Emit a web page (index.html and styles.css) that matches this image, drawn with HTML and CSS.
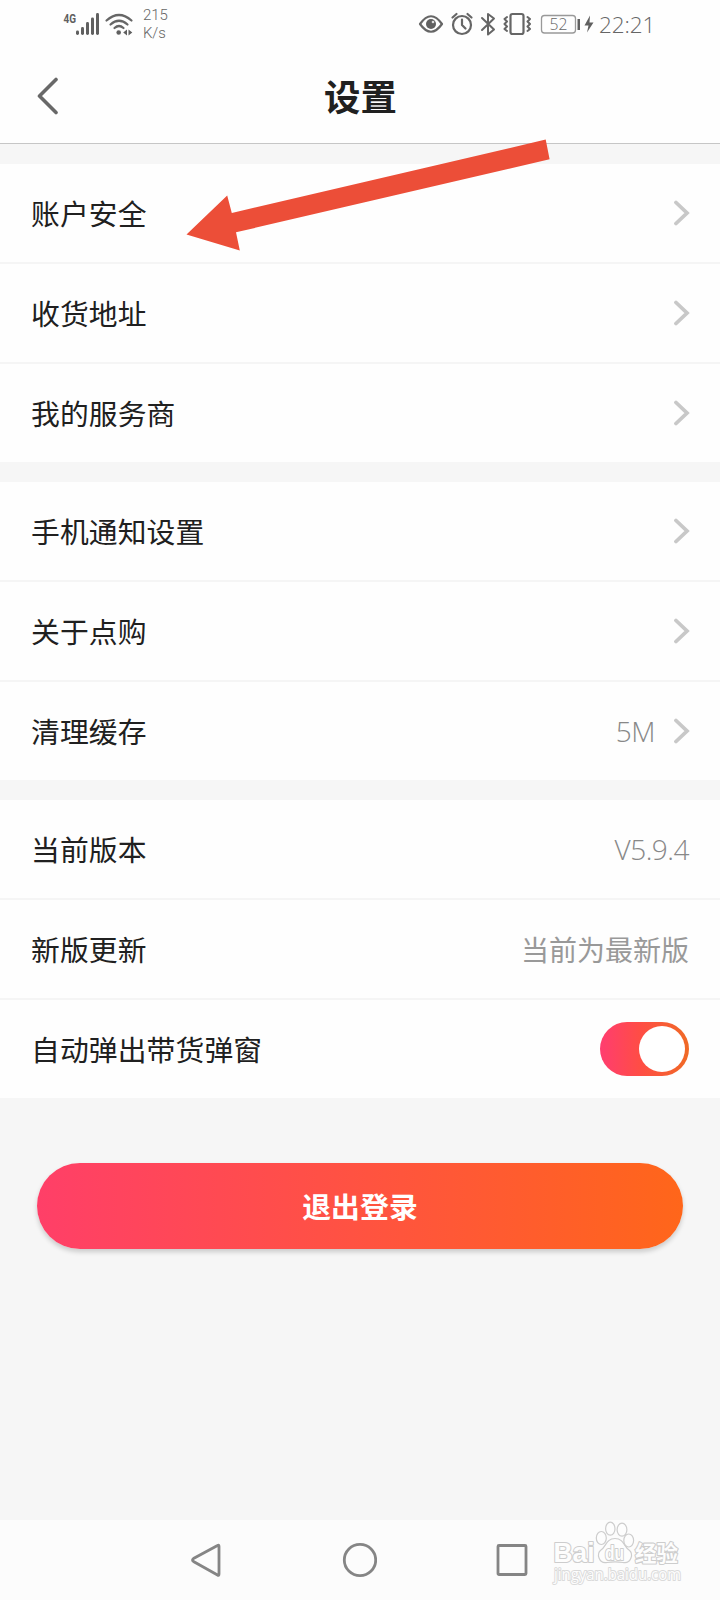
FILE: index.html
```html
<!DOCTYPE html>
<html lang="zh-CN">
<head>
<meta charset="utf-8">
<title>设置</title>
<link rel="stylesheet" href="styles.css">
</head>
<body>
<div class="screen">
  <div class="status">
    <div class="status-group">
      <svg width="76" height="48" viewBox="63 0 76 48">
        <text class="net" x="63.5" y="22.500" textLength="12.5" lengthAdjust="spacingAndGlyphs">4G</text>
        <g class="solid">
          <rect x="76" y="30.500" width="3" height="4.500" rx="1.400"/><rect x="81" y="27" width="3" height="8" rx="1.400"/><rect x="86" y="22" width="3" height="13" rx="1.400"/><rect x="91" y="17.500" width="3" height="17.500" rx="1.400"/><rect x="96" y="13" width="3" height="22" rx="1.400"/>
          <circle cx="118.700" cy="32.500" r="2.300"/>
          <path d="M127 29.500v6l-3.800-3zM128.500 29.500v6l3.800-3z"/>
        </g>
        <g class="line"><path d="M106.500 20.500Q119 9.500 131.500 20.500"/><path d="M110.500 24.500Q119 17 127.500 24.500"/><path d="M114.500 28Q119 24 123.500 28"/></g>
      </svg>
      <div class="speed"><span>215</span><span>K/s</span></div>
    </div>
    <div class="status-group">
      <svg width="178" height="48" viewBox="418 0 178 48">
        <g class="line">
          <path d="M420 24Q431 8.500 442 24Q431 39.500 420 24z"/>
          <circle cx="462" cy="25" r="9"/><path d="M462 19.500V25l3.500 3.500M452.500 17.500l4-3.500M471.500 17.500l-4-3.500"/>
          <path class="thin" d="M482 18l12 11.500-6 5V14l6 4.500L482 30"/>
          <rect x="510.500" y="14" width="13" height="20" rx="2"/>
          <path class="thin" d="M507 17l-2.500 2 2.500 2.500-2.500 2.500 2.500 2.500-2.500 2.500 2.500 2M527.500 17l2.500 2-2.500 2.500 2.500 2.500-2.500 2.500 2.500 2.500-2.500 2"/>
        </g>
        <circle class="solid" cx="431" cy="24" r="5"/><circle cx="433" cy="22" r="1.300" fill="#ddd"/>
        <rect class="battery" x="541.500" y="15.500" width="34" height="17.500" rx="3"/>
        <text class="charge" x="549.500" y="30" textLength="18" lengthAdjust="spacingAndGlyphs">52</text>
        <path class="solid" d="M577.500 19h2.500v11h-2.500zM590 15.500l-5.500 10h4l-1.500 7 6.500-10h-4z"/>
      </svg>
      <span class="clock">22:21</span>
    </div>
  </div>

  <header class="header">
    <svg class="back" width="24" height="40" viewBox="0 0 24 40"><path d="M20 4.500L3.500 21 20 37.500"/></svg>
    <h1 class="title">设置</h1>
  </header>

  <main class="content">
    <section class="group">
      <div class="row"><span>账户安全</span><svg class="chev" viewBox="0 0 16 26"><path d="M2 2.500L13 13 2 23.500"/></svg></div>
      <div class="row"><span>收货地址</span><svg class="chev" viewBox="0 0 16 26"><path d="M2 2.500L13 13 2 23.500"/></svg></div>
      <div class="row"><span>我的服务商</span><svg class="chev" viewBox="0 0 16 26"><path d="M2 2.500L13 13 2 23.500"/></svg></div>
    </section>
    <section class="group">
      <div class="row"><span>手机通知设置</span><svg class="chev" viewBox="0 0 16 26"><path d="M2 2.500L13 13 2 23.500"/></svg></div>
      <div class="row"><span>关于点购</span><svg class="chev" viewBox="0 0 16 26"><path d="M2 2.500L13 13 2 23.500"/></svg></div>
      <div class="row"><span>清理缓存</span><div class="more"><span class="value">5M</span><svg class="chev" viewBox="0 0 16 26"><path d="M2 2.500L13 13 2 23.500"/></svg></div></div>
    </section>
    <section class="group">
      <div class="row"><span>当前版本</span><span class="value">V5.9.4</span></div>
      <div class="row"><span>新版更新</span><span class="value cjk">当前为最新版</span></div>
      <div class="row"><span>自动弹出带货弹窗</span><div class="toggle"><div class="knob"></div></div></div>
    </section>
    <button class="logout">退出登录</button>
  </main>

  <nav class="nav">
    <svg width="34" height="40" viewBox="0 0 34 40"><path d="M29.500 5.500Q31 4.500 31 6.500V34Q31 36 29.500 35L5.500 21.500Q3.500 20 5.500 18.500z"/></svg>
    <svg width="36" height="40" viewBox="0 0 36 40"><circle cx="19" cy="20" r="15.700"/></svg>
    <svg width="34" height="40" viewBox="0 0 34 40"><rect x="3" y="5.500" width="28" height="29" rx="1"/></svg>
  </nav>

  <svg class="arrow" width="370" height="120" viewBox="183 135 370 120"><path d="M186.500 234.400L227.200 195.500 231.800 213 545.700 139.600 549.600 159.300 236 232.300 239.800 250.500z"/></svg>

  <svg class="mark" width="136" height="72" viewBox="550 1520 136 72">
    <text class="mark-big" x="553.500" y="1562" textLength="41" lengthAdjust="spacingAndGlyphs">Bai</text>
    <path d="M615 1538.500C606 1538.500 606 1547 601 1550C596 1554 599 1564 607 1562.500C613 1561.500 617 1561.500 623 1562.500C631 1564 634 1554 629 1550C624 1547 624 1538.500 615 1538.500z"/>
    <ellipse cx="601.300" cy="1538" rx="5" ry="6.500"/><ellipse cx="610.300" cy="1528.700" rx="4.700" ry="6.500"/><ellipse cx="622" cy="1529.700" rx="4.900" ry="6.500"/><ellipse cx="628.700" cy="1540.500" rx="4.900" ry="6.500"/>
    <text class="mark-du" x="605" y="1559.500" textLength="19" lengthAdjust="spacingAndGlyphs">du</text>
    <text class="mark-cn" x="635" y="1561" textLength="43" lengthAdjust="spacingAndGlyphs">经验</text>
    <text class="mark-url" x="554" y="1579.500" textLength="127" lengthAdjust="spacingAndGlyphs">jingyan.baidu.com</text>
  </svg>
</div>
</body>
</html>
```
FILE: styles.css
```css
* { box-sizing: border-box; }
body { margin: 0; background: #f6f6f6; }
.screen {
  position: relative;
  display: flex;
  flex-direction: column;
  width: 720px;
  height: 1600px;
  overflow: hidden;
  background: #f6f6f6;
  color: #202020;
  font-family: "Noto Sans CJK SC", sans-serif;
}
svg { display: block; flex: none; }

.status {
  display: flex;
  justify-content: space-between;
  height: 48px;
  padding: 0 67px 0 63px;
  background: #fefefe;
  color: #666;
}
.status-group { display: flex; }
.speed {
  display: flex;
  flex-direction: column;
  padding: 6px 0 0 4px;
  font: 300 15px/18px Roboto, sans-serif;
  letter-spacing: -.1px;
}
.clock {
  width: 57px;
  padding-left: 3px;
  font: 300 22.5px/50px "Open Sans", sans-serif;
  letter-spacing: -.1px;
  white-space: nowrap;
}
.solid { fill: #606060; }
.line { fill: none; stroke: #666; stroke-width: 2.2; stroke-linecap: round; stroke-linejoin: round; }
.thin { stroke-width: 2; }
.net { font: 700 13px Roboto, sans-serif; fill: #606060; }
.battery { fill: none; stroke: #999; stroke-width: 1.3; }
.charge { font: 300 16px "Open Sans", sans-serif; fill: #666; }

.header {
  display: grid;
  grid-template-columns: 100px 1fr 99px;
  align-items: center;
  height: 96px;
  padding-bottom: 1px;
  border-bottom: 1px solid #c6c6c6;
  background: #fefefe;
}
.back { margin-left: 36px; fill: none; stroke: #686868; stroke-width: 3.6; stroke-linecap: round; stroke-linejoin: round; }
.title { margin: 0; font-size: 36.4px; line-height: 52px; font-weight: 700; text-align: center; }

.content {
  display: flex;
  flex-direction: column;
  flex: 1;
  gap: 20px;
  padding-top: 20px;
}
.group { background: #fefefe; }
.row {
  display: flex;
  align-items: center;
  justify-content: space-between;
  height: 98px;
  padding: 0 31px 0 31px;
  font-size: 28.8px;
  line-height: 42px;
  letter-spacing: .1px;
}
.row + .row { height: 100px; border-top: 2px solid #f5f5f5; }
.more { display: flex; align-items: center; gap: 19px; margin-right: -1px; }
.row > .chev { margin-right: -1px; }
.value { font-family: "Open Sans", sans-serif; font-size: 28px; font-weight: 300; color: #888; letter-spacing: -.5px; }
.cjk { font-family: "Noto Sans CJK SC", sans-serif; font-weight: 400; color: #999; letter-spacing: 0; }
.chev { width: 16px; height: 26px; fill: none; stroke: #c8c8c8; stroke-width: 3.8; stroke-linecap: round; stroke-linejoin: miter; }
.toggle {
  display: flex;
  align-items: center;
  justify-content: flex-end;
  width: 89px;
  height: 54px;
  padding-right: 4px;
  border-radius: 27px;
  background: linear-gradient(90deg, #ff3d70 0%, #ff4d45 45%, #f06a25 100%);
}
.knob { width: 46px; height: 46px; border-radius: 50%; background: #fff; }
.logout {
  width: 646px;
  height: 86px;
  margin: 45px 0 0 37px;
  padding: 0 0 1px;
  border: 0;
  border-radius: 43px;
  background: linear-gradient(90deg, #ff3f68, #ff661a);
  box-shadow: 0 3px 5px rgba(0, 0, 0, .18);
  color: #fff;
  font: 700 28.8px/42px "Noto Sans CJK SC", sans-serif;
  letter-spacing: .1px;
}

.nav {
  display: flex;
  align-items: center;
  justify-content: space-between;
  height: 80px;
  padding: 0 191px 0 188px;
  background: #fcfcfc;
}
.nav svg { fill: none; stroke: #858585; stroke-width: 2.8; }
.arrow { position: absolute; left: 183px; top: 135px; fill: #ec4e38; }

.mark { position: absolute; left: 550px; top: 1520px; overflow: visible; fill: #fdfdfd; stroke: #cdcdcd; stroke-width: 1.2; }
.mark text { paint-order: stroke; stroke-width: 2.2; stroke-linejoin: round; }
.mark-big { font: 700 28px "Liberation Sans", sans-serif; }
.mark .mark-du { font: 700 20px "Liberation Sans", sans-serif; }
.mark-cn { font: 700 22px "Noto Sans CJK SC", sans-serif; }
.mark .mark-url { font: 400 16px "Open Sans", sans-serif; stroke: #dadada; stroke-width: 2; }
```
